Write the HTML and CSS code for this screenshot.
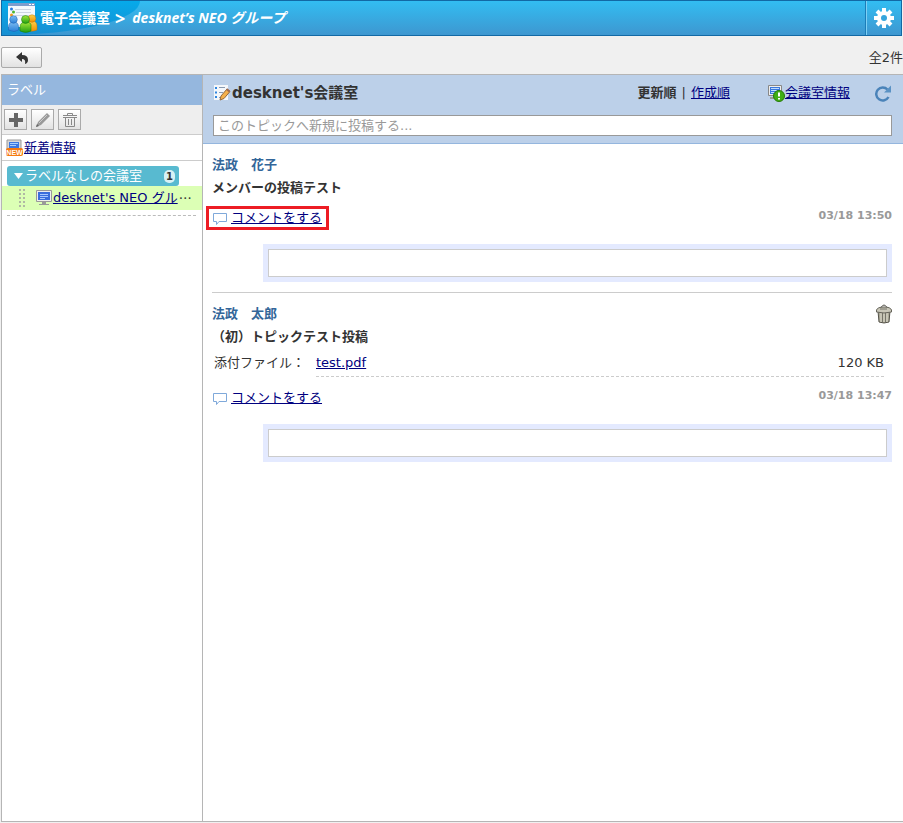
FILE: index.html
```html
<!DOCTYPE html>
<html lang="ja">
<head>
<meta charset="UTF-8">
<title>電子会議室</title>
<meta name="viewport" content="width=device-width, initial-scale=1">
<link rel="stylesheet" href="styles.css">
</head>
<body>

<header class="app-header">
  <div class="app-name">
    <svg class="app-icon" width="32" height="32" viewBox="0 0 32 32">
      <defs>
        <linearGradient id="blue" x2="0" y2="1"><stop offset="0" stop-color="#7dbcf2"/><stop offset="1" stop-color="#2a7fd8"/></linearGradient>
        <linearGradient id="green" x2="0" y2="1"><stop offset="0" stop-color="#a5e83a"/><stop offset="1" stop-color="#1f9e10"/></linearGradient>
        <linearGradient id="orange" x2="0" y2="1"><stop offset="0" stop-color="#ffd04a"/><stop offset="1" stop-color="#f09000"/></linearGradient>
      </defs>
      <path d="M1 1h27v24H1z" fill="#f4f8fd"/>
      <path d="M1 1h27v3H1z" fill="#7d9ccc"/>
      <path d="M22 2.500h2M25 2.500h2" stroke="#fff"/>
      <path d="M8 7.500h16M9 10.500h15M8 13.500h15" stroke="#cdd5e2"/>
      <circle cx="4.500" cy="7" r="1.500" fill="#2a7be0"/>
      <circle cx="6.500" cy="10" r="1.500" fill="#4cb52c"/>
      <circle cx="4.500" cy="13" r="1.500" fill="#f59a1c"/>
      <g stroke="#b06a00" stroke-width=".4"><path d="M20 29v-5q0-5 5-5t5 5v4q-4 2-10 1z" fill="url(#orange)"/><circle cx="25" cy="16.500" r="3.800" fill="url(#orange)"/></g>
      <g stroke="#1a5fae" stroke-width=".5"><path d="M1.500 28v-3q0-5 5-5t5 5v3q-4 3-10 0z" fill="url(#blue)"/><circle cx="6.500" cy="17.500" r="3.800" fill="url(#blue)"/></g>
      <g stroke="#137a0c" stroke-width=".5"><path d="M13 29v-4q0-5 6-5t5 5v4q-5 3-11 0z" fill="url(#green)"/><circle cx="18.500" cy="17.500" r="4" fill="url(#green)"/></g>
    </svg>
    <h1>電子会議室</h1>
  </div>
  <span class="crumb-sep">&gt;</span>
  <span class="crumb">desknet’s NEO グループ</span>
  <button type="button" class="settings" aria-label="設定">
    <svg width="20" height="20" viewBox="0 0 20 20">
      <g stroke="#fff" stroke-width="4"><path d="M10 0v20M0 10h20M3 3l14 14M17 3L3 17"/></g>
      <circle cx="10" cy="10" r="7" fill="#fff"/>
      <circle cx="10" cy="10" r="3" fill="#36a5dc"/>
    </svg>
  </button>
</header>

<div class="toolbar">
  <button type="button" class="btn back" aria-label="戻る">
    <svg width="14" height="14" viewBox="0 0 14 14"><path d="M1 6l6-5v3q6 0 6 5 0 3-3 4 1-5-3-5v3z" fill="#333"/></svg>
  </button>
  <span class="total">全2件</span>
</div>

<div class="panel">
  <!-- ラベル一覧 -->
  <aside class="sidebar">
    <h2 class="sidebar-title">ラベル</h2>
    <div class="label-tools">
      <button type="button" class="btn tool" aria-label="追加">
        <svg width="16" height="16" viewBox="0 0 16 16"><path d="M6 1h4v5h5v4h-5v5H6v-5H1V6h5z" fill="#666"/></svg>
      </button>
      <button type="button" class="btn tool" aria-label="編集">
        <svg width="16" height="16" viewBox="0 0 16 16"><path d="M1 15l2-5 9-9 3 3-9 9z" fill="#999"/><path d="M4 11l8-8" stroke="#ccc"/><path d="M1 15l1-3 2 2z" fill="#666"/></svg>
      </button>
      <button type="button" class="btn tool" aria-label="削除">
        <svg width="16" height="16" viewBox="0 0 16 16" fill="none" stroke="#888"><path d="M5.500 3V1.500h5V3M1 3.500h14M1 5.500h14M3.500 6v8.500h9V6M6.500 7v6M9.500 7v6"/></svg>
      </button>
    </div>
    <div class="news">
      <svg width="17" height="17" viewBox="0 0 17 17">
        <path d="M1 1h14v11H1z" fill="#d8d8d8" stroke="#999"/><path d="M3 3h10v7H3z" fill="#3c78e0"/><path d="M4 4.500h8M4 6.500h6" stroke="#a8d0ff"/>
        <rect y="9" width="17" height="8" rx="2" fill="#f57a10"/>
        <text x="8.500" y="15.500" class="new-mark">NEW</text>
      </svg>
      <a href="#">新着情報</a>
    </div>
    <div class="label-group">
      <svg width="10" height="6" viewBox="0 0 10 6"><path d="M0 0h9L4.500 6z" fill="#fff"/></svg>
      <span>ラベルなしの会議室</span>
      <span class="count">1</span>
    </div>
    <div class="room">
      <svg class="grip" width="6" height="18" viewBox="0 0 6 18"><path d="M1 0v18M5 0v18" stroke="#b0b8a4" stroke-width="2" stroke-dasharray="2 2"/></svg>
      <svg width="16" height="16" viewBox="0 0 16 16">
        <path d="M.5.5h15v11H.500z" fill="#eee" stroke="#999"/><path d="M2 2h12v8H2z" fill="#3a6ddc"/><path d="M4 4.500h8M4 6.500h8M4 8.500h5" stroke="#a8c8ff"/><path d="M6 12h4v2h3v1H3v-1h3z" fill="#999"/>
      </svg>
      <a href="#">desknet's NEO グル</a><span class="more">…</span>
    </div>
    <div class="label-end"></div>
  </aside>

  <!-- トピック -->
  <main class="topic">
    <div class="topic-head">
      <div class="topic-row">
        <svg width="18" height="18" viewBox="0 0 18 18">
          <path d="M1 1h14v15H1z" fill="#f4f7fb"/>
          <path d="M2 4h2M2 8.500h2M2 13h2" stroke="#2f86e0" stroke-width="2"/><path d="M6 3.500h6M6 8.500h4M6 13.500h2" stroke="#8a9ab0"/>
          <path d="M7 16l1-4 6-7 3 2.500-6 7z" fill="#f5b04a" stroke="#94683a"/><path d="M13.500 5l3 2.500" stroke="#a06a50" stroke-width="2"/>
        </svg>
        <h2>desknet's会議室</h2>
        <div class="sort"><strong>更新順</strong><span class="bar">|</span><a href="#">作成順</a></div>
        <div class="info">
          <svg width="18" height="18" viewBox="0 0 18 18">
            <path d="M1.500 1.500h13v10h-13z" fill="#eee" stroke="#888"/><path d="M3 3h10v7H3z" fill="#3a78dc"/><path d="M4 4.500h8M4 6.500h6M4 8.500h4" stroke="#c0dcff"/><path d="M3 13h6v2H3z" fill="#999"/>
            <circle cx="12" cy="12" r="5.500" fill="#3fae14" stroke="#277a08"/><path d="M12 8.500v4M12 14v1.500" stroke="#fff" stroke-width="2"/>
          </svg>
          <a href="#">会議室情報</a>
        </div>
        <button type="button" class="reload" aria-label="再読み込み">
          <svg width="18" height="18" viewBox="0 0 18 18"><path d="M13.500 5.500A6.500 6.500 0 1 0 14.500 13" fill="none" stroke="#4a83b9" stroke-width="2.500"/><path d="M17 1.500v7h-7z" fill="#5b92c4"/></svg>
        </button>
      </div>
      <input type="text" class="new-post" placeholder="このトピックへ新規に投稿する..." aria-label="新規投稿">
    </div>

    <article class="post">
      <h3 class="author">法政　花子</h3>
      <p class="subject">メンバーの投稿テスト</p>
      <div class="post-foot">
        <a href="#" class="comment marked"><svg width="14" height="13" viewBox="0 0 14 13"><path d="M.5 1.500h13v8H6l-2.500 3v-3h-3z" fill="#fff" stroke="#7fa9da"/></svg><span>コメントをする</span></a>
        <time>03/18 13:50</time>
      </div>
      <div class="reply"><input type="text" aria-label="コメント"></div>
    </article>

    <article class="post">
      <div class="post-head">
        <h3 class="author">法政　太郎</h3>
        <button type="button" class="delete" aria-label="投稿を削除">
          <svg width="16" height="20" viewBox="0 0 16 20">
            <path d="M2 7h12l-1 11q-5 2-10 0z" fill="#aaa896" stroke="#55534a"/><path d="M5 8v10M8 8v10M11 8v10" stroke="#e4e2d4"/><path d="M6.500 9v9M9.500 9v9" stroke="#77756a"/>
            <path d="M.5 6q1-3 7.500-3t7.500 3v2q-7.500 2-15 0z" fill="#c9c7b8" stroke="#66645a"/><path d="M5 3.500q3-5 6 0" fill="none" stroke="#55534a"/><path d="M4 5h7" stroke="#77756a"/>
          </svg>
        </button>
      </div>
      <p class="subject">（初）トピックテスト投稿</p>
      <div class="attach">
        <span class="attach-label">添付ファイル：</span>
        <div class="file"><a href="#">test.pdf</a><span>120 KB</span></div>
      </div>
      <div class="post-foot">
        <a href="#" class="comment"><svg width="14" height="13" viewBox="0 0 14 13"><path d="M.5 1.500h13v8H6l-2.500 3v-3h-3z" fill="#fff" stroke="#7fa9da"/></svg><span>コメントをする</span></a>
        <time>03/18 13:47</time>
      </div>
      <div class="reply"><input type="text" aria-label="コメント"></div>
    </article>
  </main>
</div>

</body>
</html>
```
FILE: styles.css
```css
*{box-sizing:border-box}
body{margin:0;padding:0 0 1px 1px;min-height:100vh;display:flex;flex-direction:column;background:#f0f0f0;color:#333;font:13px/20px "DejaVu Sans","Noto Sans CJK JP",sans-serif}
h1,h2,h3,p{margin:0;font-size:inherit}
a{color:#000080}
svg{display:block;flex:none}
button{padding:0;border:0;background:none;cursor:pointer}
input{font:inherit;color:#333;border-radius:0}

/* ---- header ---- */
.app-header{display:flex;align-items:center;height:36px;margin-right:1px;border:1px solid #1269a5;background:linear-gradient(#32bdf2,#3e97d0);color:#fff;font-family:"Open Sans","Noto Sans CJK JP",sans-serif;font-weight:bold}
.app-name{display:flex;align-items:center;gap:1px;width:138px;height:34px;padding-left:5px;background:linear-gradient(#06aaea,#178fd2);border-bottom-right-radius:138px 34px}
.app-name h1{font-size:14px}
.crumb-sep{margin-left:-25px;font-size:18px}
.crumb{margin-left:7px;font-size:14px;font-style:italic}
.settings{display:flex;align-items:center;justify-content:center;width:35px;height:34px;margin-left:auto;border-left:1px solid #7fd0f5;box-shadow:-1px 0 #1c7db8}

/* ---- toolbar ---- */
.toolbar{display:flex;align-items:center;justify-content:space-between;height:38px;padding-top:5px}
.btn{display:flex;align-items:center;justify-content:center;border:1px solid #aaa;background:linear-gradient(#fff,#e2e2e2)}
.back{width:41px;height:21px;border-radius:2px}

.panel{flex:1;display:flex;border:1px solid #b5b5b5;border-right:0;background:#fff}

/* ---- sidebar ---- */
.sidebar{flex:none;width:201px;border-right:1px solid #b5b5b5}
.sidebar-title{height:30px;padding-left:5px;background:#95b7de;color:#fff;font-weight:normal;line-height:30px}
.label-tools{display:flex;align-items:center;gap:4px;height:30px;padding-left:2px;background:#eee;border-bottom:1px solid #ccc}
.tool{width:23px;height:21px}
.news{display:flex;align-items:center;gap:1px;height:26px;padding-left:4px;border-bottom:1px solid #ccc}
.new-mark{font:bold 7px "Liberation Sans",sans-serif;fill:#fff;text-anchor:middle}
.label-group{display:flex;align-items:center;gap:1px;height:20px;margin:5px 23px 0 5px;padding:0 4px 0 7px;border-radius:3px;background:#58bad0;color:#fff}
.count{width:11px;height:13px;margin-left:auto;border-radius:5px;background:#d8f1f5;color:#333;font-size:10px;font-weight:bold;line-height:13px;text-align:center}
.room{display:flex;align-items:center;gap:1px;height:24px;padding-left:17px;background:#dcffb5;white-space:nowrap}
.grip{margin-right:10px}
.more{font-family:"Noto Sans CJK JP",sans-serif}
.label-end{margin:5px 6px 0 5px;border-bottom:1px dashed #bbb}

/* ---- topic ---- */
.topic{flex:1;min-width:0}
.topic-head{height:69px;padding:8px 11px 0 10px;background:#bcd0e9;border-bottom:1px solid #94b6de}
.topic-row{display:flex;align-items:center;height:20px;gap:1px}
.topic-row h2{font-size:15px}
.sort{display:flex;margin-left:auto}
.bar{margin:0 5px}
.info{display:flex;align-items:center;margin-left:36px}
.reload{margin-left:23px}
.new-post{display:block;width:100%;height:21px;margin-top:12px;padding:0 4px;border:1px solid #999;background:#fff}
.new-post::placeholder{color:#999}

.post{margin:0 11px 0 9px;padding:11px 0 10px;border-bottom:1px solid #ccc}
.post:last-child{border-bottom:0}
.post-head{display:flex;justify-content:space-between}
.author{color:#336699}
.subject{font-weight:bold;line-height:26px}
.post-foot{display:flex;justify-content:space-between;margin-top:5px}
.comment{display:flex;align-items:center;gap:4px;height:24px;margin-left:-6px;padding:0 4px;border:3px solid transparent}
.comment span{text-decoration:underline}
.comment.marked{border-color:#ed1c24}
time{color:#999;font-size:11px;font-weight:bold}
.reply{margin:14px 0 0 51px;padding:5px;background:#e4eaff}
.reply input{display:block;width:100%;height:28px;padding:0 4px;border:1px solid #ccc;background:#fff}
.attach{display:flex;margin-bottom:9px;padding:0 8px 0 2px;line-height:26px}
.attach-label{width:102px}
.file{flex:1;display:flex;justify-content:space-between;border-bottom:1px dashed #ccc}
```
